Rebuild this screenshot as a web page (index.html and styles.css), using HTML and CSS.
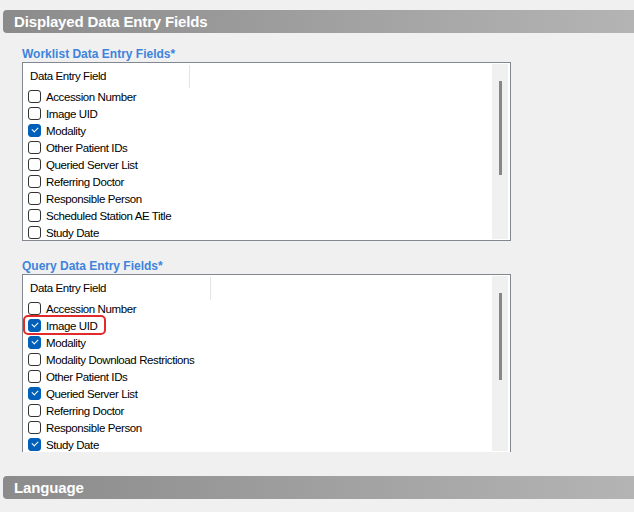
FILE: index.html
```html
<!DOCTYPE html>
<html lang="en">
<head>
    <meta charset="UTF-8">
    <title>Displayed Data Entry Fields</title>
    <link rel="stylesheet" href="styles.css">
</head>
<body>

<div class="bar">Displayed Data Entry Fields</div>

<div class="section">
    <div class="label">Worklist Data Entry Fields*</div>
    <div class="listbox">
        <div class="list">
            <div class="list-head"><span class="col">Data Entry Field</span></div>
            <label class="item"><span class="box"></span>Accession Number</label>
            <label class="item"><span class="box"></span>Image UID</label>
            <label class="item"><span class="box on"></span>Modality</label>
            <label class="item"><span class="box"></span>Other Patient IDs</label>
            <label class="item"><span class="box"></span>Queried Server List</label>
            <label class="item"><span class="box"></span>Referring Doctor</label>
            <label class="item"><span class="box"></span>Responsible Person</label>
            <label class="item"><span class="box"></span>Scheduled Station AE Title</label>
            <label class="item"><span class="box"></span>Study Date</label>
        </div>
        <div class="scroll"><div class="thumb thumb-a"></div></div>
    </div>
</div>

<div class="section second">
    <div class="label">Query Data Entry Fields*</div>
    <div class="listbox open">
        <div class="list">
            <div class="list-head"><span class="col wide">Data Entry Field</span></div>
            <label class="item"><span class="box"></span>Accession Number</label>
            <label class="item flagged"><span class="box on"></span>Image UID</label>
            <label class="item"><span class="box on"></span>Modality</label>
            <label class="item"><span class="box"></span>Modality Download Restrictions</label>
            <label class="item"><span class="box"></span>Other Patient IDs</label>
            <label class="item"><span class="box on"></span>Queried Server List</label>
            <label class="item"><span class="box"></span>Referring Doctor</label>
            <label class="item"><span class="box"></span>Responsible Person</label>
            <label class="item"><span class="box on"></span>Study Date</label>
        </div>
        <div class="scroll"><div class="thumb thumb-b"></div></div>
    </div>
</div>

<div class="bar lang">Language</div>

</body>
</html>
```

FILE: styles.css
```css
body {
    margin: 0;
    background: #f0f0f0;
    font-family: "Liberation Sans", Arial, sans-serif;
    color: #000;
    height: 512px;
    overflow: hidden;
}

.bar {
    margin: 10px 0 0 3px;
    height: 23px;
    line-height: 23px;
    padding-left: 11px;
    border-radius: 4px 0 0 4px;
    background: linear-gradient(to right, #8b8b8b, #b4b4b4);
    color: #fff;
    font-size: 15px;
    font-weight: bold;
    letter-spacing: -0.15px;
}

.bar.lang {
    margin-top: 24px;
}

.section {
    padding-left: 22px;
}

.label {
    margin-top: 14px;
    height: 14px;
    line-height: 14px;
    font-size: 12px;
    font-weight: bold;
    color: #3d84dc;
}

.second .label {
    margin-top: 18px;
}

.listbox {
    margin-top: 1px;
    width: 486px;
    height: 175px;
    border: 1px solid #828790;
    padding: 1px 1px 1px 0;
    background: #fff;
    display: flex;
    overflow: hidden;
}

.listbox.open {
    border-bottom: none;
    height: 175px;
}

.list {
    flex: 1;
    overflow: hidden;
    font-size: 11.5px;
    letter-spacing: -0.4px;
}

.list-head {
    height: 24px;
    display: flex;
    align-items: center;
}

.col {
    width: 159px;
    height: 23px;
    line-height: 22px;
    padding-left: 7px;
    border-right: 1px solid #e5e5e5;
    margin-top: 1px;
}

.col.wide {
    width: 180px;
}

.item {
    position: relative;
    display: flex;
    align-items: center;
    height: 17px;
    padding-left: 5px;
    white-space: nowrap;
}

.box {
    width: 11px;
    height: 11px;
    border: 1px solid #333;
    border-radius: 3px;
    margin-right: 5px;
    flex: none;
    position: relative;
}

.box.on {
    background: #005fb8;
    border-color: #005fb8;
}

.box.on::after {
    content: "";
    position: absolute;
    left: 3px;
    top: 2px;
    width: 5px;
    height: 3px;
    border-left: 1px solid #fff;
    border-bottom: 1px solid #fff;
    transform: rotate(-45deg);
}

.flagged::before {
    content: "";
    position: absolute;
    left: 0;
    top: -2px;
    width: 79px;
    height: 16px;
    border: 2px solid #e2292b;
    border-radius: 5px;
}

.scroll {
    width: 16px;
    background: #f0f0f0;
    position: relative;
    margin-right: 1px;
}

.thumb {
    position: absolute;
    left: 7px;
    width: 3px;
    background: #878787;
}

.thumb-a {
    top: 17px;
    height: 94px;
}

.thumb-b {
    top: 17px;
    height: 87px;
}
```
